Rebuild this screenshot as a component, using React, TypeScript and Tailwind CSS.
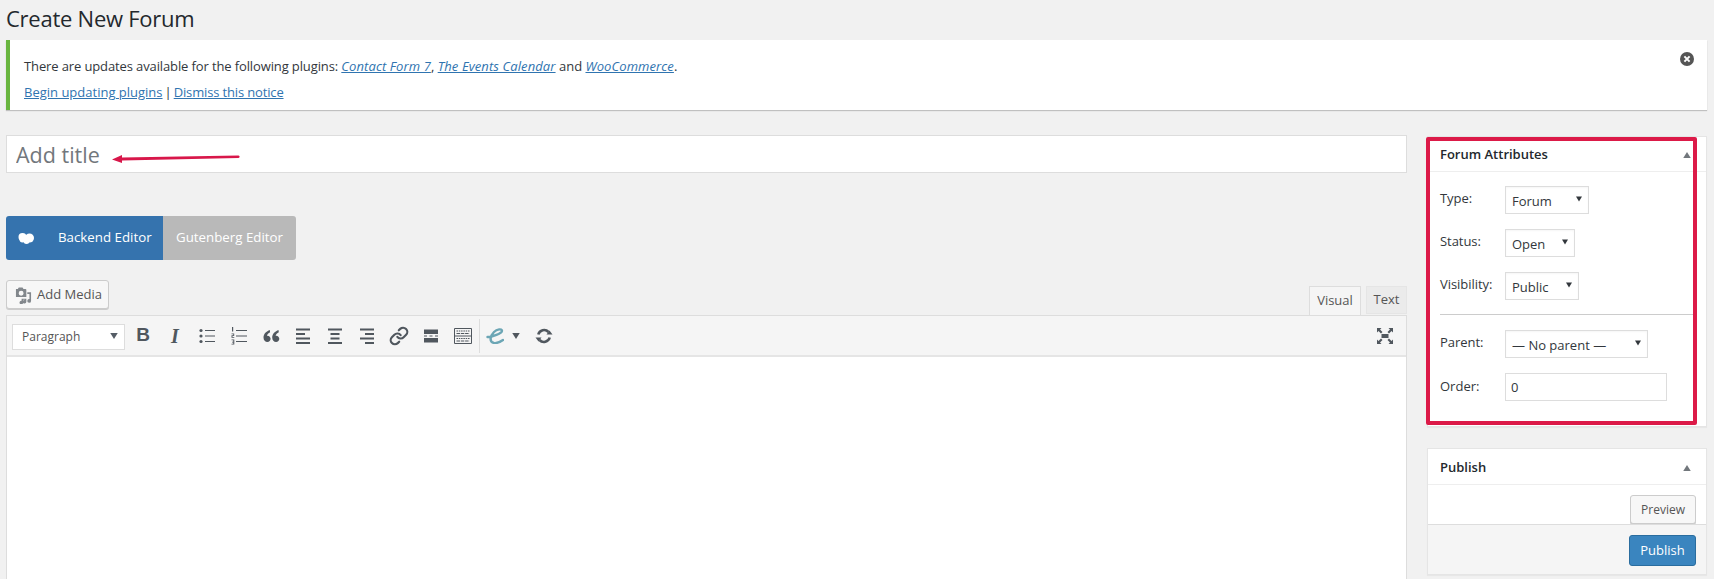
import { Link as LinkIcon } from 'lucide-react';

const font = { fontFamily: '"Open Sans", sans-serif' };

function Caret({ className }: { className: string }) {
  return (
    <svg viewBox="0 0 10 8" className={className} fill="currentColor">
      <path d="M0 0h10L5 8z" />
    </svg>
  );
}

function Field({ label, value, width }: { label: string; value: string; width: string }) {
  return (
    <div className="flex items-center h-[28px]">
      <label className="w-[65px] text-[13px] font-medium text-[#32373c] -mt-[3px] tracking-[-0.05px]">{label}</label>
      <div className={`relative h-[28px] ${width}`}>
        <select
          defaultValue={value}
          className="appearance-none w-full h-full bg-white border border-[#ddd] pl-[6px] pt-[3px] text-[13px] text-[#32373c] outline-none shadow-[inset_0_1px_2px_rgba(0,0,0,0.04)]"
        >
          <option>{value}</option>
        </select>
        <Caret className="absolute right-[7px] top-[10px] w-[6px] h-[6px] text-[#32373c] pointer-events-none" />
      </div>
    </div>
  );
}

function ToolButton({ children }: { children: React.ReactNode }) {
  return <button className="w-[32px] h-[26px] flex items-center justify-center text-[#50575e]">{children}</button>;
}

function Lines({ d }: { d: string }) {
  return (
    <svg viewBox="0 0 20 20" className="w-[20px] h-[20px]" stroke="currentColor" fill="none" strokeWidth="2">
      <path d={d} />
    </svg>
  );
}

export default function App() {
  return (
    <div className="h-[579px] w-[1714px] overflow-hidden bg-[#f1f1f1] text-[#32373c]" style={font}>
      <h1 className="h-[40px] pl-[6px] text-[22px] tracking-[-0.25px] leading-[37px] text-[#23282d]">Create New Forum</h1>

      <div className="ml-[6px] w-[1701px] h-[70px] bg-white border-l-4 border-[#69b53f] shadow-[0_1px_1px_rgba(0,0,0,0.2)] pl-[14px] pr-[13px] flex justify-between">
        <div className="text-[13px] pt-[15px]">
          <p className="h-[26px] leading-[22px]">
            <span className="tracking-[-0.12px]">There are updates available for the following plugins: </span>
            <a className="italic underline text-[#2f74b0] tracking-[0.1px]">Contact Form 7</a>,{' '}
            <a className="italic underline text-[#2f74b0] tracking-[0.1px]">The Events Calendar</a> and{' '}
            <a className="italic underline text-[#2f74b0] tracking-[0.1px]">WooCommerce</a>.
          </p>
          <p className="leading-[22px]">
            <a className="underline text-[#2f74b0]">Begin updating plugins</a>
            <span className="mx-[2px]">|</span>
            <a className="underline text-[#2f74b0] tracking-[-0.15px]">Dismiss this notice</a>
          </p>
        </div>
        <svg viewBox="0 0 14 14" className="w-[14px] h-[14px] mt-[12px] text-[#555]">
          <circle cx="7" cy="7" r="7" fill="currentColor" />
          <path d="M4.4 4.4l5.2 5.2M9.6 4.4l-5.2 5.2" stroke="#fff" strokeWidth="2" />
        </svg>
      </div>

      <div className="flex ml-[6px] mt-[25px]">
        <div className="w-[1401px] h-[444px] flex flex-col">
          <div className="relative h-[38px]">
            <input
              placeholder="Add title"
              className="w-full h-full bg-white border border-[#ddd] pl-[9px] pt-[1px] text-[21.5px] text-[#32373c] placeholder:text-[#72777c] outline-none"
            />
            <svg viewBox="0 0 128 9" className="absolute left-[106px] top-[19px] w-[128px] h-[9px] text-[#d8174a]" fill="currentColor">
              <path d="M0 5.500 10 1V3.400L126.500 1.500c1.500 0 1.500 2.500 0 2.500L10 6.500V9z" />
            </svg>
          </div>

          <div className="flex mt-[43px] h-[44px] text-[13.3px] text-white">
            <button className="w-[157px] bg-[#3573ae] rounded-l-[3px] flex items-center">
              <svg viewBox="0 0 16 11" className="w-[16px] h-[11px] ml-[12px] text-white" fill="currentColor">
                <circle cx="4.500" cy="4" r="4" />
                <circle cx="11.500" cy="5" r="4.500" />
                <circle cx="4.500" cy="6.500" r="3" />
                <circle cx="8.500" cy="8" r="3" />
              </svg>
              <span className="ml-[24px]">Backend Editor</span>
            </button>
            <button className="w-[133px] bg-[#b9b9b9] rounded-r-[3px] text-center">Gutenberg Editor</button>
          </div>

          <div className="flex justify-between mt-[20px] h-[35px]">
            <button className="h-[29px] w-[103px] flex items-center gap-[5px] pl-[8px] pt-[1px] bg-[#f7f7f7] border border-[#ccc] rounded-[3px] shadow-[0_1px_0_#ccc] text-[13px] text-[#555]">
              <svg viewBox="0 0 18 18" className="w-[17px] h-[17px] text-[#82878c]" fill="currentColor">
                <path d="M1 2h2l1-1.500h4L9 2h2a1 1 0 0 1 1 1v7.500H1zM6.500 4a2.600 2.600 0 1 0 0 5.200 2.600 2.600 0 0 0 0-5.200z" fillRule="evenodd" />
                <path d="M13 5.500h4v9.200a2 2 0 1 1-1.700-2V7.500H13zM7 12.500h5v3.200a1.900 1.900 0 1 1-1.600-1.900v-.2H8.600v2.900a1.900 1.900 0 1 1-1.600-1.900z" />
              </svg>
              Add Media
            </button>
            <div className="flex items-end gap-[5px] text-[13px] text-[#555]">
              <span className="w-[52px] h-[29px] bg-[#f5f5f5] border border-[#ddd] border-b-0 flex items-center justify-center">Visual</span>
              <span className="w-[41px] h-[28px] mb-[1px] bg-[#ebebeb] border border-[#e5e5e5] flex items-center justify-center">Text</span>
            </div>
          </div>

          <div className="flex-1 flex flex-col border border-[#ddd] border-b-0 bg-white">
            <div className="h-[41px] bg-[#f5f5f5] border-b-2 border-[#e5e5e5] flex items-center pl-[5px] text-[#50575e]">
              <div className="relative w-[113px] h-[26px] mr-[2px]">
                <select
                  defaultValue="Paragraph"
                  className="appearance-none w-full h-full bg-white border border-[#ddd] pl-[9px] text-[12px] text-[#555] outline-none"
                >
                  <option>Paragraph</option>
                </select>
                <Caret className="absolute right-[7px] top-[10px] w-[8px] h-[6px] text-[#555d66] pointer-events-none" />
              </div>
              <ToolButton>
                <span className="text-[19px] font-bold" style={{ fontFamily: '"Liberation Sans", sans-serif' }}>B</span>
              </ToolButton>
              <ToolButton>
                <span className="text-[20px] font-bold italic" style={{ fontFamily: '"Liberation Serif", serif' }}>I</span>
              </ToolButton>
              <ToolButton>
                <svg viewBox="0 0 20 20" className="w-[20px] h-[20px]" fill="currentColor">
                  <circle cx="4" cy="4.500" r="1.600" />
                  <circle cx="4" cy="10" r="1.600" />
                  <circle cx="4" cy="15.500" r="1.600" />
                  <path d="M8 4h10v1H8zM8 9.500h10v1H8zM8 15h10v1H8z" />
                </svg>
              </ToolButton>
              <ToolButton>
                <svg viewBox="0 0 20 20" className="w-[20px] h-[20px]" fill="currentColor">
                  <path d="M3 1h1.200v4.500H3zM2.500 7.500h2.700v2.400H3.500v1h1.800v.8H2.500V9.300h1.800v-1H2.500zM2.500 13.500h2.800v5h-2.800v-.8h1.800v-1.200H3v-.7h1.300v-1.500H2.500z" />
                  <path d="M7 4h11v1H7zM7 9.500h11v1H7zM7 15h11v1H7z" />
                </svg>
              </ToolButton>
              <ToolButton>
                <svg viewBox="0 0 20 20" className="w-[20px] h-[20px]" fill="currentColor">
                  <path d="M8.800 4C5.500 5.200 2.500 7.800 2.500 11.500 2.500 14.300 4.300 16 6.400 16c1.800 0 3.200-1.400 3.200-3.200 0-1.700-1.300-3.100-3-3.100-.3 0-.5 0-.7.100.4-1.400 1.500-2.700 3.200-3.600z" />
                  <path d="M17.500 4c-3.300 1.200-6.300 3.800-6.300 7.500 0 2.800 1.800 4.500 3.900 4.500 1.800 0 3.200-1.400 3.200-3.200 0-1.700-1.300-3.100-3-3.100-.3 0-.5 0-.7.100.4-1.400 1.500-2.700 3.200-3.600z" />
                </svg>
              </ToolButton>
              <ToolButton><Lines d="M3 3.500h14M3 8h9M3 12.500h14M3 17h14" /></ToolButton>
              <ToolButton><Lines d="M3 3.500h14M5.500 8h9M5.500 12.500h9M3 17h14" /></ToolButton>
              <ToolButton><Lines d="M3 3.500h14M8 8h9M3 12.500h14M8 17h9" /></ToolButton>
              <ToolButton><LinkIcon className="w-[20px] h-[20px]" strokeWidth={2.6} /></ToolButton>
              <ToolButton>
                <svg viewBox="0 0 20 20" className="w-[20px] h-[20px]" fill="currentColor">
                  <path d="M3 3.500h14V8H3zM3 9.500h3v1H3zM8.500 9.500h3v1h-3zM14 9.500h3v1h-3zM3 12h14v4.500H3z" />
                </svg>
              </ToolButton>
              <ToolButton>
                <svg viewBox="0 0 18 16" className="w-[18px] h-[16px]" fill="none" stroke="currentColor">
                  <path d="M.5.500h17v15H.5zM.5 8h17" strokeWidth="1" />
                  <path d="M2.500 3h13M2.500 10.500h13" strokeWidth="1" strokeDasharray="1.500 .8" />
                  <path d="M2.500 5.500h13M2.500 13h13" strokeWidth="1.200" strokeDasharray="3.500 .8" />
                </svg>
              </ToolButton>
              <div className="w-px h-[34px] bg-[#ddd] mr-[6px]" />
              <svg viewBox="0 0 18 16" className="w-[18px] h-[16px] text-[#6ca6b5]" fill="none" stroke="currentColor" strokeWidth="2.400" strokeLinecap="round">
                <path d="M1.500 9C6 9 16 5.500 16 2.700 16 .5 11 1 8 4 4 8 3 14 8 15c3 .5 6-1 9-3" />
              </svg>
              <Caret className="w-[8px] h-[6px] ml-[8px]" />
              <button className="ml-[14px] w-[20px] h-[20px] flex items-center justify-center text-[#50575e]">
                <svg viewBox="0 0 18 18" className="w-[18px] h-[18px]" fill="none" stroke="currentColor" strokeWidth="2.600">
                  <path d="M3.300 7.500A6 6 0 0 1 13.500 5" />
                  <path d="M14.700 10.500A6 6 0 0 1 4.500 13" />
                  <path d="M11.500 7.500h6l-3-4z" fill="currentColor" stroke="none" />
                  <path d="M6.500 10.500h-6l3 4z" fill="currentColor" stroke="none" />
                </svg>
              </button>
              <svg viewBox="0 0 18 18" className="ml-auto mr-[12px] w-[18px] h-[18px]" fill="currentColor">
                <path d="M5.500 7h7v4h-7z" />
                <path d="M1 1h4.500L4 2.500 6.500 5 5 6.500 2.500 4 1 5.500zM17 1v4.500L15.500 4 13 6.500 11.500 5 14 2.500 12.500 1zM1 17v-4.500L2.500 14 5 11.500 6.500 13 4 15.500 5.500 17zM17 17h-4.500l1.500-1.500L11.500 13 13 11.500l2.500 2.500 1.500-1.500z" />
              </svg>
            </div>
          </div>
        </div>

        <div className="ml-[20px] w-[280px] mt-[1px]">
          <div className="relative h-[291px] bg-white border border-[#e5e5e5] shadow-[0_1px_1px_rgba(0,0,0,0.04)]">
            <div className="h-[35px] pl-[12px] pr-[16px] pt-[2px] flex items-center justify-between border-b border-[#eee]">
              <h2 className="text-[13px] font-semibold text-[#23282d]">Forum Attributes</h2>
              <Caret className="w-[8px] h-[6px] rotate-180 text-[#72777c] -mr-[1px]" />
            </div>
            <div className="pl-[12px] pt-[14px] flex flex-col gap-[15px]">
              <Field label="Type:" value="Forum" width="w-[84px]" />
              <Field label="Status:" value="Open" width="w-[70px]" />
              <Field label="Visibility:" value="Public" width="w-[74px]" />
            </div>
            <div className="ml-[12px] mr-[9px] mt-[14px] mb-[15px] border-t border-[#ccc]" />
            <div className="pl-[12px] flex flex-col gap-[15px]">
              <Field label="Parent:" value="— No parent —" width="w-[143px]" />
              <div className="flex items-center h-[28px]">
                <label className="w-[65px] text-[13px] font-medium text-[#32373c]">Order:</label>
                <input defaultValue="0" className="w-[162px] h-[28px] bg-white border border-[#ddd] pl-[5px] text-[13px] text-[#32373c] outline-none" />
              </div>
            </div>
            <div className="absolute left-[-2px] top-[0px] w-[271px] h-[288px] border-4 border-[#dc1a48] rounded-[2px] pointer-events-none" />
          </div>

          <div className="mt-[21px] h-[127px] bg-white border border-[#e5e5e5] shadow-[0_1px_1px_rgba(0,0,0,0.04)] flex flex-col">
            <div className="h-[36px] shrink-0 pl-[12px] pr-[16px] pt-[2px] flex items-center justify-between border-b border-[#eee]">
              <h2 className="text-[13px] font-semibold text-[#23282d]">Publish</h2>
              <Caret className="w-[8px] h-[6px] rotate-180 text-[#72777c] -mr-[1px]" />
            </div>
            <div className="h-[39px] shrink-0 flex justify-end items-start pt-[10px] pr-[10px]">
              <button className="w-[66px] h-[29px] shrink-0 bg-[#f7f7f7] border border-[#ccc] rounded-[3px] shadow-[0_1px_0_#ccc] text-[12px] text-[#555]">Preview</button>
            </div>
            <div className="flex-1 bg-[#f5f5f5] border-t border-[#ddd] flex justify-end pt-[10px] pr-[10px]">
              <button className="w-[67px] h-[31px] bg-[#3a85bf] border border-[#2a6d9f] rounded-[3px] text-[13px] text-white">Publish</button>
            </div>
          </div>
        </div>
      </div>
    </div>
  );
}
